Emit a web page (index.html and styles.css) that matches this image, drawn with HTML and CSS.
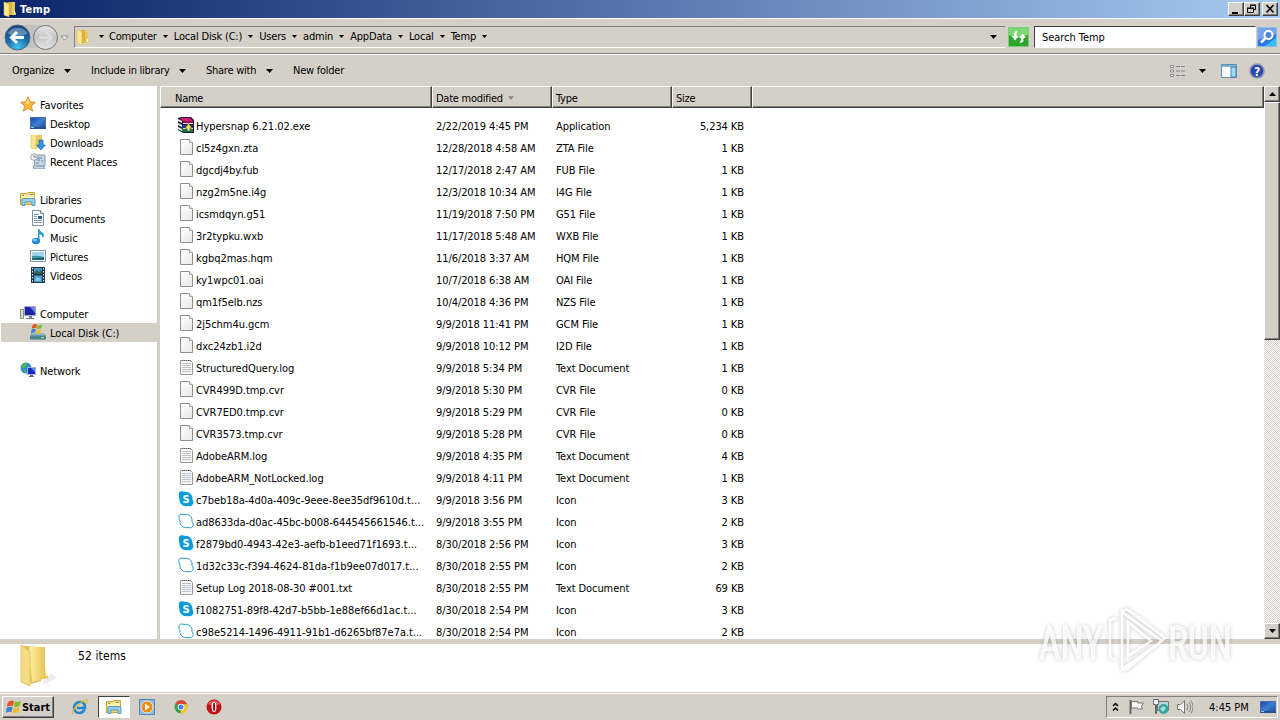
FILE: index.html
```html
<!DOCTYPE html>
<html lang="en">
<head>
    <meta charset="UTF-8">
    <meta name="viewport" content="width=device-width, initial-scale=1.0">
    <title>Temp</title>
    <link rel="stylesheet" href="styles.css">
</head>
<body>
    <!-- Icon definitions -->
    <svg class="defs" width="16" height="16">
        <defs>
            <linearGradient id="gold" x1="0" x2="1"><stop offset="0" stop-color="#fff0a0"/><stop offset="1" stop-color="#e2bd4c"/></linearGradient>
            <linearGradient id="page" x1="0" y1="0" x2="1" y2="1"><stop offset="0" stop-color="#fff"/><stop offset="1" stop-color="#e8e8e8"/></linearGradient>
            <linearGradient id="screen" x1="0" y1="0" x2="1" y2="1"><stop offset="0" stop-color="#1a3fa8"/><stop offset=".5" stop-color="#3f7fd8"/><stop offset="1" stop-color="#1c3f96"/></linearGradient>
            <radialGradient id="navblue" cx=".5" cy=".9" r=".9"><stop offset="0" stop-color="#3fc4ee"/><stop offset=".5" stop-color="#1c6fae"/><stop offset="1" stop-color="#123f78"/></radialGradient>
            <linearGradient id="navgray" x1="0" y1="0" x2="0" y2="1"><stop offset="0" stop-color="#e8e8e8"/><stop offset=".5" stop-color="#c4c4c4"/><stop offset="1" stop-color="#e4e4e4"/></linearGradient>
        </defs>
        <symbol id="folder" viewBox="0 0 16 16">
            <path d="M3 2l5-1v13l-5 1z" fill="#e3bc4e"/>
            <path d="M7 1h6v10l1 1v2H7z" fill="#ecc95c"/>
            <path d="M7 1h3v13H7z" fill="#dbb044"/>
            <path d="M2 1l5 2v13l-5-2z" fill="#fbe78e" stroke="#dcb850" stroke-width=".5"/>
            <path d="M12 10h1v3h-1z" fill="#fff"/>
        </symbol>
        <symbol id="file" viewBox="0 0 16 16">
            <path d="M2.500.500h9l3 3v12h-12z" fill="url(#page)" stroke="#8e8e8e"/>
            <path d="M11.500.500v3h3" fill="#fff" stroke="#a8a8a8"/>
        </symbol>
        <symbol id="text" viewBox="0 0 16 16">
            <path d="M2.500 1.500h10l2 2v12h-12z" fill="#f8f8f8" stroke="#9a9a9a"/>
            <path d="M4 4.500h9M4 6.500h9M4 8.500h9M4 10.500h9M4 12.500h9" stroke="#b9c6cd"/>
            <path d="M4 1.500h9" stroke="#666" stroke-dasharray="1 1"/>
        </symbol>
        <symbol id="skype" viewBox="0 0 16 16">
            <path d="M1 4C0 1 3-.5 6 .8c5-1 9 3 8.500 7.700C17 12 14 16.500 10 15 5 16 1 12.500 1.500 8 .7 6 .8 5 1 4z" fill="#0b9bd8"/>
            <text class="skype-s" x="8" y="12">S</text>
        </symbol>
        <symbol id="skypeline" viewBox="0 0 16 16">
            <path d="M1 4C.5 1.500 3 .3 6 1.500c5-1 8.500 2 8 7C17 12 14 16 10 14.500 5 15.500 1.500 12 2 8 1 6 .9 5 1 4z" fill="#fff" stroke="#2499cd"/>
        </symbol>
        <symbol id="rar" viewBox="0 0 16 16">
            <path d="M0 1l3-1h10l3 3v13H5l-5-3z" fill="#1c1a24"/>
            <path d="M2 1h10l3 3H5z" fill="#d41a78"/><path d="M5 4h10v2H5z" fill="#9c0c54"/>
            <path d="M1 6l4 2h10v3H5L1 9z" fill="#27309a"/><path d="M1 10l4 2h10v3H5l-4-2z" fill="#157a44"/>
            <path d="M5 6.500h10M5 11.500h10" stroke="#ddd"/>
            <path d="M0 2l4 2v2L0 4zM0 6l4 2v2L0 8zM0 10l4 2v2l-4-2z" fill="#eee"/>
            <path d="M9 14v-3H7l3.500-4.500L14 11h-2v3z" fill="#f2e44c" stroke="#333" stroke-width=".5"/>
        </symbol>
        <symbol id="star" viewBox="0 0 16 16">
            <path d="M8 .8l2.200 4.900 5.300.6-4 3.600 1.200 5.300L8 12.500l-4.700 2.700 1.200-5.300-4-3.600 5.300-.6z" fill="#fbb83c" stroke="#d97916" stroke-width=".7"/>
            <path d="M8 3l1.300 4L8 8 4 7l2.500-.5z" fill="#ffe79a"/>
        </symbol>
        <symbol id="desktop" viewBox="0 0 16 16">
            <path d="M.5 2.500h15v11H.5z" fill="url(#screen)" stroke="#4a6ca8"/>
            <path d="M0 12h16v2H0z" fill="#29518c"/><path d="M1 12h3v1H1z" fill="#7fd0e8"/>
        </symbol>
        <symbol id="downloads" viewBox="0 0 16 16">
            <path d="M1 1l5 1v13l-5-1z" fill="#fbe78e" stroke="#dcb850" stroke-width=".6"/>
            <path d="M6 1h6v13H6z" fill="#ecc95c"/>
            <path d="M9 6h4v5h2.500L11 16l-4.500-5H9z" fill="#3795e0" stroke="#1c68ad" stroke-width=".7"/>
        </symbol>
        <symbol id="recent" viewBox="0 0 16 16">
            <path d="M4 2h11v11h-2l2 3H4l-1-3h2z" fill="#c9d8e5" stroke="#8195a6"/>
            <path d="M7 5h5M7 7h3M11 8h2M6 10h3M6 13h7" stroke="#5e87aa"/>
            <circle cx="4" cy="4" r="3.300" fill="#f5f8fa" stroke="#98a7b3"/><path d="M4 2v2h2" fill="none" stroke="#667"/>
        </symbol>
        <symbol id="library" viewBox="0 0 16 16">
            <path d="M.5 2.500h6l1-1h7v12H.5z" fill="#f3d66b" stroke="#caa43c"/>
            <path d="M1 4h13v3H1z" fill="#fdf2ab"/><path d="M2 4h2v1H2z" fill="#52b166"/><path d="M10 3h3v1h-3z" fill="#5599d8"/>
            <path d="M2 14.500V9q0-1.500 1.500-1.500h10Q15 7.500 15 9v5.500h-3V11H5v3.500z" fill="#93cff0" stroke="#438dbd" stroke-width=".8"/>
        </symbol>
        <symbol id="document" viewBox="0 0 16 16">
            <path d="M2.500.5h8l3 3v12h-11z" fill="#fff" stroke="#7691ad"/>
            <path d="M4 4.500h5M4 6.500h3M4 8.500h3M4 10.500h8M4 12.500h8" stroke="#7798ba"/><path d="M8 6h4v3H8z" fill="#315b8a"/><path d="M10.500.5v3h3" fill="#d5e3ef" stroke="#7691ad"/>
        </symbol>
        <symbol id="music" viewBox="0 0 16 16">
            <path d="M8 0h1.500c0 3 4.500 3 4.500 7l-1.500 2c0-3-2-3.500-3-4v7H8z" fill="#2c9bcc"/>
            <ellipse cx="6" cy="12" rx="4" ry="3.200" fill="#2387d6"/><ellipse cx="5" cy="11" rx="2" ry="1.200" fill="#8bd3f4"/>
        </symbol>
        <symbol id="picture" viewBox="0 0 16 16">
            <path d="M.5 2.500h15v11H.5z" fill="#fff" stroke="#7896ac"/><path d="M2 4h12v8H2z" fill="#9fd4ee"/>
            <path d="M2 8q5-1 12 1v3H2z" fill="#3c97a4"/><path d="M2 10.500l12-1V12H2z" fill="#1c6570"/>
        </symbol>
        <symbol id="video" viewBox="0 0 16 16">
            <path d="M1 0h14v16H1z" fill="#263442"/><path d="M4 1h8v6H4z" fill="#4595cc"/><path d="M4 8.500h8V15H4z" fill="#4a9ed6"/>
            <path d="M4 6l3-3 2 2 3-2v4H4z" fill="#316451"/><path d="M5 13l3-3 3 3-3 1z" fill="#8fd0ee"/>
            <path d="M2.500 1v15M13.500 1v15" stroke="#dce5ea" stroke-dasharray="1.500 1.500"/>
        </symbol>
        <symbol id="computer" viewBox="0 0 16 16">
            <path d="M.5 4.500h3v9h-3z" fill="#d5dccd" stroke="#8b957f"/>
            <path d="M4.500 1.500h11v9h-11z" fill="#1b27a8" stroke="#a5abc9"/><path d="M10 2h5v6z" fill="#6c7fe4"/>
            <path d="M9 11h3v2h2v1H6v-1h3z" fill="#777d90"/>
        </symbol>
        <symbol id="flag4" viewBox="0 0 16 16">
            <path d="M2 3q3-2.500 6-1L7 7Q4 6 .8 8z" fill="#e35524"/><path d="M9 2.500q3 1 6-.5l-1.500 5q-3 1.500-5.500.5z" fill="#7fb928"/>
            <path d="M.6 9q3-2 6-.8L5.500 13q-3-1-5.500 1z" fill="#3b80d8"/><path d="M7.600 8.500q3 1.300 6-.3l-1.300 5q-3 1.500-6 .3z" fill="#f5bd25"/>
        </symbol>
        <symbol id="disk" viewBox="0 0 16 16">
            <path d="M1 9h13l2 2.500v4H0v-4z" fill="#8fb4be"/><path d="M0 11.500h16v4H0z" fill="#528292"/><path d="M11 13h3v1h-3z" fill="#8bec70"/>
            <use href="#flag4" x="1" y="-1" width="12" height="12"/>
        </symbol>
        <symbol id="network" viewBox="0 0 16 16">
            <circle cx="6" cy="6" r="5.500" fill="#2c8ed0"/><path d="M2 3q3-3 5-2L6 5 2 7zM3 9l3-1v3z" fill="#51b947"/>
            <path d="M7.500 5.500h8v7h-8z" fill="#1c2cb8" stroke="#a4b2da"/><path d="M11 6h4v4z" fill="#5f82e8"/><path d="M10 13h3v1h1v1H9v-1h1z" fill="#667"/>
        </symbol>
        <symbol id="down" viewBox="0 0 7 4"><path d="M0 0h7L3.500 4z"/></symbol>
    </svg>

    <header class="title-bar">
        <svg class="icon"><use href="#folder"/></svg>
        <h1>Temp</h1>
        <div class="window-buttons">
            <button><svg width="10" height="10"><path d="M1 8h6v2H1z"/></svg></button>
            <button><svg width="10" height="10"><path d="M3.500 4V1.500h5v4H7M3 1h6M.5 4.500h6v4h-6zM0 4h7" fill="none" stroke="#000"/></svg></button>
            <button class="close"><svg width="10" height="10"><path d="M1.500 1l7 7.500M8.500 1l-7 7.500" stroke="#000" stroke-width="1.600"/></svg></button>
        </div>
    </header>

    <div class="nav-bar">
        <svg class="nav-buttons" width="70" height="30">
            <path d="M14 3h34v23H14z" fill="#b9b9b9" opacity=".6"/>
            <circle cx="16.500" cy="15.500" r="12.500" fill="url(#navblue)" stroke="#53697c"/>
            <path d="M6.500 11.500a11 10 0 0 1 20 0q-10 5-20 0z" fill="#fff" opacity=".3"/>
            <path d="M23 15.500H11M16 10l-5.500 5.500L16 21" fill="none" stroke="#fff" stroke-width="3"/>
            <circle cx="44.500" cy="15.500" r="12" fill="url(#navgray)" stroke="#777"/>
            <path d="M38 15.500h12M45 10l5.500 5.500L45 21" fill="none" stroke="#dedede" stroke-width="2.500"/>
            <path d="M60 14h7l-3.500 4z" fill="#eee" stroke="#999"/>
        </svg>
        <div class="address">
            <svg class="icon"><use href="#folder"/></svg>
            <ul id="breadcrumbs"></ul>
            <svg class="arrow"><use href="#down"/></svg>
        </div>
        <svg class="refresh" width="21" height="20">
            <path d="M.5.500h20v19H.5z" fill="#2ba52d" stroke="#7ccf78"/><path d="M1 1h19v7q-9 5-19 0z" fill="#7cd775"/>
            <path d="M9.500 4Q6 4 6 7v2H3.500L7 13.500 10.500 9H8.500V7zM11.500 16q4 0 4-3v-2H18l-3.500-4.500L11 11h2v2z" fill="#fff"/>
        </svg>
        <div class="search">Search Temp</div>
        <svg class="search-button" width="20" height="20">
            <path d="M.5.500h19v19H.5z" fill="#2c7ae0" stroke="#8fb9e8"/><path d="M1 1h18v6L1 13z" fill="#7aa2ec"/><path d="M8 19l11-8v8z" fill="#35c0f0"/>
            <circle cx="11.500" cy="8" r="4" fill="#4d83de" stroke="#fff" stroke-width="2"/><path d="M8.500 11L4 15.500" stroke="#fff" stroke-width="2.500"/>
        </svg>
    </div>

    <div class="toolbar">
        <span class="organize">Organize</span><svg class="arrow"><use href="#down"/></svg>
        <span class="include">Include in library</span><svg class="arrow"><use href="#down"/></svg>
        <span class="share">Share with</span><svg class="arrow"><use href="#down"/></svg>
        <span class="new-folder">New folder</span>
        <div class="view-tools">
            <svg width="16" height="14"><path d="M.5 1.500h3v2h-3zM.5 6h3v2h-3zM.5 10.500h3v2h-3z" fill="#fff" stroke="#8a8a8a"/><path d="M6 2.500h9M6 7h9M6 11.500h9" stroke="#778090" stroke-dasharray="4 1"/></svg>
            <svg class="arrow"><use href="#down"/></svg>
            <svg class="preview" width="16" height="14"><path d="M.5.500h15v13H.5z" fill="#fff" stroke="#5b91b5"/><path d="M1 1h14v2H1z" fill="#7eb3d2"/><path d="M10 3h5v10h-5z" fill="#a5d8ec" stroke="#4289b2"/></svg>
            <svg class="help" width="16" height="16"><circle cx="8" cy="8" r="7" fill="#2747b4" stroke="#9098ac" stroke-width="1.600"/><text x="8" y="12.500">?</text></svg>
        </div>
    </div>

    <main>
        <nav class="sidebar" id="sidebar"></nav>
        <section class="files">
            <div class="file-head">
                <span>Name</span><span>Date modified<svg class="sort"><use href="#down"/></svg></span><span>Type</span><span>Size</span><span></span>
            </div>
            <div id="file-list"></div>
        </section>
        <div class="scrollbar">
            <button><svg width="7" height="4"><path d="M0 4h7L3.500 0z"/></svg></button>
            <div class="thumb"></div>
            <div class="track"></div>
            <button><svg width="7" height="4"><path d="M0 0h7L3.500 4z"/></svg></button>
        </div>
    </main>

    <section class="details">
        <svg width="46" height="46" viewBox="0 0 46 46">
            <path d="M28 38l8-9 6 5-12 6z" fill="#999" opacity=".2"/>
            <path d="M8 2l18 1v34l-10 3z" fill="#dfbc55"/>
            <path d="M14 3h16v23l3 3v5l-16 4z" fill="url(#gold)"/>
            <path d="M6 1l9 7v34l-9-4z" fill="#f4dc83" stroke="#e3c567"/>
            <path d="M30 24l3-1v8l-2 2z" fill="#fffbe8"/>
        </svg>
        <p>52 items</p>
    </section>

    <footer class="taskbar">
        <button class="start"><svg width="16" height="16" viewBox="0 0 16 16"><use href="#flag4"/></svg>Start</button>
        <div class="quick-launch">
            <span><svg class="icon" viewBox="0 0 16 16"><path d="M12.500 10.500Q11 14 7.500 14C4 14 2 11.500 2 8.500S4.500 3 8 3s5.500 3 5 6H5" fill="none" stroke="#2186d0" stroke-width="2.600"/><path d="M1 15Q-1 12 6 6t9-5q1 1-1 4" fill="none" stroke="#e9b62c" stroke-width="1.300"/></svg></span>
            <span class="active"><svg class="icon"><use href="#library"/></svg></span>
            <span><svg class="icon" viewBox="0 0 16 16"><path d="M.5.500h15v15H.5z" fill="#8ebde4" stroke="#5585b4"/><circle cx="8" cy="8" r="6" fill="#f58b13" stroke="#e5edf5"/><path d="M6 4.500l5 3.500-5 3.500z" fill="#fff"/></svg></span>
            <span><svg class="icon" viewBox="0 0 16 16"><circle cx="8" cy="8" r="6.500" fill="#36a14c"/><path d="M8 8L2.400 4.500A6.500 6.500 0 0 1 14 5.200H8z" fill="#dd4437"/><path d="M8 8V5.200h6A6.500 6.500 0 0 1 7.500 14.500z" fill="#f5c629"/><circle cx="8" cy="8" r="3.300" fill="#fff"/><circle cx="8" cy="8" r="2.500" fill="#417fe0"/></svg></span>
            <span><svg class="icon" viewBox="0 0 16 16"><circle cx="8" cy="8" r="7.500" fill="#bd1418"/><path d="M2 5a7 7 0 0 1 12 0L8 7z" fill="#e65a58"/><ellipse cx="8" cy="8" rx="2.400" ry="5" fill="#fff"/><ellipse cx="8" cy="8" rx="1.100" ry="4.300" fill="#a20f12"/></svg></span>
        </div>
        <div class="tray">
            <svg width="7" height="10"><path d="M1 4l2.500-2.500L6 4M1 8.500L3.500 6 6 8.500" fill="none" stroke="#000" stroke-width="1.500"/></svg>
            <svg class="tray-flag" width="16" height="16"><path d="M1.500 1v14" stroke="#666" stroke-width="2"/><path d="M2.500 2.500h6v1.500h6l-2 3 1 3h-5V9h-6z" fill="#f7f7f7" stroke="#777"/></svg>
            <svg class="tray-net" width="16" height="16"><path d="M4.500 2.500h11v9h-11z" fill="#bad5dc" stroke="#777"/><path d="M.5.500h5v5h-2v9h-1v-9h-2z" fill="#f4f4f4" stroke="#666"/><circle cx="10.500" cy="10" r="5" fill="#35a4a0"/><path d="M7 10q3-5 6-1l-3 4z" fill="#a0ded2"/></svg>
            <svg class="tray-sound" width="16" height="16"><path d="M.5 5.500h3l4-4v13l-4-4h-3z" fill="#f8f8f8" stroke="#777"/><path d="M10 5q2 3 0 6M12 3q3.500 5 0 10M14 1.500q4 6.500 0 13" fill="none" stroke="#888"/></svg>
            <span class="clock">4:45 PM</span>
            <svg class="icon"><use href="#desktop"/></svg>
        </div>
    </footer>

    <svg class="watermark" width="204" height="72">
        <text x="5" y="54" textLength="64" lengthAdjust="spacingAndGlyphs">ANY</text>
        <text x="134" y="54" textLength="64" lengthAdjust="spacingAndGlyphs">RUN</text>
        <path d="M82 13l-6 2v37l6 3M88 7v57l40-28zM94 17v34l23-15zM88 7l5-3 38 29-38 31-5 1" />
    </svg>

    <script>
        const crumbs = ["Computer", "Local Disk (C:)", "Users", "admin", "AppData", "Local", "Temp"];

        const groups = [
            [["star", "Favorites"], ["desktop", "Desktop"], ["downloads", "Downloads"], ["recent", "Recent Places"]],
            [["library", "Libraries"], ["document", "Documents"], ["music", "Music"], ["picture", "Pictures"], ["video", "Videos"]],
            [["computer", "Computer"], ["disk", "Local Disk (C:)"]],
            [["network", "Network"]]
        ];

        // icon, name, date, type, size
        const files = [
            ["rar", "Hypersnap 6.21.02.exe", "2/22/2019 4:45 PM", "Application", "5,234 KB"],
            ["file", "cl5z4gxn.zta", "12/28/2018 4:58 AM", "ZTA File", "1 KB"],
            ["file", "dgcdj4by.fub", "12/17/2018 2:47 AM", "FUB File", "1 KB"],
            ["file", "nzg2m5ne.i4g", "12/3/2018 10:34 AM", "I4G File", "1 KB"],
            ["file", "icsmdqyn.g51", "11/19/2018 7:50 PM", "G51 File", "1 KB"],
            ["file", "3r2typku.wxb", "11/17/2018 5:48 AM", "WXB File", "1 KB"],
            ["file", "kgbq2mas.hqm", "11/6/2018 3:37 AM", "HQM File", "1 KB"],
            ["file", "ky1wpc01.oai", "10/7/2018 6:38 AM", "OAI File", "1 KB"],
            ["file", "qm1f5elb.nzs", "10/4/2018 4:36 PM", "NZS File", "1 KB"],
            ["file", "2j5chm4u.gcm", "9/9/2018 11:41 PM", "GCM File", "1 KB"],
            ["file", "dxc24zb1.i2d", "9/9/2018 10:12 PM", "I2D File", "1 KB"],
            ["text", "StructuredQuery.log", "9/9/2018 5:34 PM", "Text Document", "1 KB"],
            ["file", "CVR499D.tmp.cvr", "9/9/2018 5:30 PM", "CVR File", "0 KB"],
            ["file", "CVR7ED0.tmp.cvr", "9/9/2018 5:29 PM", "CVR File", "0 KB"],
            ["file", "CVR3573.tmp.cvr", "9/9/2018 5:28 PM", "CVR File", "0 KB"],
            ["text", "AdobeARM.log", "9/9/2018 4:35 PM", "Text Document", "4 KB"],
            ["text", "AdobeARM_NotLocked.log", "9/9/2018 4:11 PM", "Text Document", "1 KB"],
            ["skype", "c7beb18a-4d0a-409c-9eee-8ee35df9610d.t...", "9/9/2018 3:56 PM", "Icon", "3 KB"],
            ["skypeline", "ad8633da-d0ac-45bc-b008-644545661546.t...", "9/9/2018 3:55 PM", "Icon", "2 KB"],
            ["skype", "f2879bd0-4943-42e3-aefb-b1eed71f1693.t...", "8/30/2018 2:56 PM", "Icon", "3 KB"],
            ["skypeline", "1d32c33c-f394-4624-81da-f1b9ee07d017.t...", "8/30/2018 2:55 PM", "Icon", "2 KB"],
            ["text", "Setup Log 2018-08-30 #001.txt", "8/30/2018 2:55 PM", "Text Document", "69 KB"],
            ["skype", "f1082751-89f8-42d7-b5bb-1e88ef66d1ac.t...", "8/30/2018 2:54 PM", "Icon", "3 KB"],
            ["skypeline", "c98e5214-1496-4911-91b1-d6265bf87e7a.t...", "8/30/2018 2:54 PM", "Icon", "2 KB"]
        ];

        const icon = name => `<svg class="icon"><use href="#${name}"/></svg>`;
        const arrow = `<svg class="crumb-arrow"><use href="#down"/></svg>`;

        document.getElementById("breadcrumbs").innerHTML =
            arrow + crumbs.map(name => `<li>${name}</li>${arrow}`).join("");

        document.getElementById("sidebar").innerHTML = groups.map(group =>
            `<ul>${group.map(([i, name]) => `<li class="${i}">${icon(i)}${name}</li>`).join("")}</ul>`
        ).join("");

        document.getElementById("file-list").innerHTML = files.map(([i, name, date, type, size]) =>
            `<div class="file-row"><span class="name">${icon(i)}${name}</span><span>${date}</span><span>${type}</span><span class="size">${size}</span></div>`
        ).join("");
    </script>
</body>
</html>
```
FILE: styles.css
```css
* {
    box-sizing: border-box;
}

body {
    display: flex;
    flex-direction: column;
    width: 1280px;
    height: 720px;
    margin: 0;
    overflow: hidden;
    background-color: #d4d0c8;
    color: #000;
    font-family: 'DejaVu Sans Condensed', 'DejaVu Sans', sans-serif;
    font-stretch: condensed;
    font-size: 11px;
    letter-spacing: -0.25px;
    white-space: nowrap;
}

ul {
    list-style: none;
    margin: 0;
    padding: 0;
}

svg {
    flex: none;
}

.defs {
    position: absolute;
}

.icon {
    width: 16px;
    height: 16px;
}

.arrow {
    width: 7px;
    height: 4px;
}

button {
    display: flex;
    align-items: center;
    justify-content: center;
    padding: 0;
    background-color: #d4d0c8;
    border: 1px solid;
    border-color: #fff #404040 #404040 #fff;
    box-shadow: inset -1px -1px #808080;
}

.title-bar {
    display: flex;
    align-items: center;
    height: 18px;
    padding: 0 2px;
    background: linear-gradient(to right, #0a246a, #a6caf0);
    color: #fff;
}

.title-bar h1 {
    margin: 0 0 0 2px;
    font-size: 11px;
    letter-spacing: 0.2px;
}

.window-buttons {
    display: flex;
    margin-left: auto;
}

.window-buttons button {
    width: 16px;
    height: 14px;
}

.window-buttons .close {
    margin-left: 2px;
}

.nav-bar {
    display: flex;
    align-items: center;
    height: 36px;
    padding: 1px 2px 0 1px;
    border-top: 1px solid #fff;
    border-bottom: 1px solid #808080;
}

.nav-buttons {
    margin-right: 3px;
}

.address {
    display: flex;
    align-items: center;
    width: 931px;
    height: 22px;
    border: 1px solid #808080;
    border-right: 0;
    border-bottom-color: #fff;
}

.address > .arrow {
    margin-left: auto;
    margin-right: 8px;
}

#breadcrumbs {
    display: flex;
    align-items: center;
    margin-left: 8px;
    letter-spacing: -0.18px;
}

.crumb-arrow {
    width: 5px;
    height: 3px;
    margin: 0 6px 0 6px;
}

#breadcrumbs .crumb-arrow:first-child {
    margin-left: 0;
    margin-right: 5px;
}

.refresh {
    margin: 0 5px 0 3px;
}

.search {
    width: 222px;
    height: 22px;
    padding: 4px 7px;
    background-color: #fff;
    border: 1px solid;
    border-color: #404040 #fff #fff #404040;
    letter-spacing: -0.05px;
}

.search-button {
    margin-left: 1px;
}

.toolbar {
    display: flex;
    align-items: center;
    height: 32px;
    padding: 0 15px 0 12px;
    border-top: 1px solid #fff;
}

.organize {
    width: 52px;
}

.include {
    width: 88px;
    margin-left: 20px;
}

.share {
    width: 60px;
    margin-left: 20px;
}

.new-folder {
    margin-left: 20px;
}

.view-tools {
    display: flex;
    align-items: center;
    margin-left: auto;
}

.view-tools .arrow {
    margin: 0 15px 0 13px;
}

.help {
    margin-left: 12px;
}

.help text {
    fill: #fff;
    font-size: 12px;
    font-weight: bold;
    text-anchor: middle;
}

main {
    display: flex;
    height: 553px;
}

.sidebar {
    width: 160px;
    padding-top: 9px;
    background-color: #fff;
    border-right: 3px solid #d4d0c8;
    letter-spacing: -0.12px;
}

.sidebar ul {
    margin-bottom: 19px;
}

.sidebar li {
    display: flex;
    align-items: center;
    gap: 4px;
    height: 19px;
    padding-top: 1px;
    padding-left: 30px;
}

.sidebar .icon {
    margin-bottom: 2px;
}

.sidebar li:first-child {
    padding-left: 20px;
}

.sidebar .disk {
    margin-left: 1px;
    padding-left: 29px;
    background-color: #d4d0c8;
}

.files {
    width: 1104px;
    overflow: hidden;
    background-color: #fff;
}

.file-head {
    display: grid;
    grid-template-columns: 272px 120px 120px 80px 1fr;
    height: 22px;
    margin-bottom: 7px;
    background-color: #d4d0c8;
}

.file-head span {
    display: flex;
    align-items: center;
    padding: 2px 0 0 3px;
    border: 1px solid;
    border-color: #fff #404040 #404040 #fff;
    box-shadow: inset -1px -1px #808080;
}

.file-head span:first-child {
    padding-left: 14px;
}

.sort {
    width: 6px;
    height: 4px;
    margin-left: 5px;
    fill: #808080;
}

.file-row {
    display: grid;
    grid-template-columns: 258px 120px 120px 68px;
    align-items: center;
    height: 22px;
    padding-left: 18px;
    letter-spacing: -0.08px;
}

.file-row .name {
    display: flex;
    align-items: center;
    gap: 2px;
    letter-spacing: -0.04px;
}

.file-row .icon {
    margin-bottom: 2px;
}

.file-row .size {
    text-align: right;
}

.skype-s {
    fill: #fff;
    font-size: 11px;
    font-weight: bold;
    text-anchor: middle;
}

.scrollbar {
    display: flex;
    flex-direction: column;
    width: 16px;
}

.scrollbar button {
    height: 16px;
}

.thumb {
    height: 238px;
    background-color: #d4d0c8;
    border: 1px solid;
    border-color: #fff #404040 #404040 #fff;
    box-shadow: inset -1px -1px #808080;
}

.track {
    flex: 1;
    background: repeating-conic-gradient(#fff 0 25%, #d4d0c8 0 50%) 0 0 / 2px 2px;
}

.details {
    display: flex;
    height: 49px;
    margin-top: 5px;
    padding-left: 15px;
    background-color: #fff;
    border-bottom: 1px solid #d4d0c8;
    font-size: 12px;
    letter-spacing: 0.1px;
}

.details p {
    margin: 5px 0 0 17px;
}

.taskbar {
    display: flex;
    height: 27px;
    padding: 2px;
    border-top: 1px solid #fff;
}

.start {
    width: 52px;
    height: 22px;
    color: #000;
    font: bold 11px 'DejaVu Sans Condensed', sans-serif;
    font-stretch: condensed;
    letter-spacing: 0;
}

.quick-launch {
    display: flex;
    margin-left: 10px;
}

.quick-launch span {
    display: flex;
    align-items: center;
    justify-content: center;
    width: 32px;
    height: 22px;
    margin-right: 1.600px;
}

.quick-launch .active {
    background-color: #fff;
    border: 1px solid;
    border-color: #404040 #fff #fff #404040;
}

.tray {
    display: flex;
    align-items: center;
    width: 172px;
    height: 22px;
    margin-left: auto;
    padding: 0 1px 0 5px;
    border: 1px solid;
    border-color: #808080 #fff #fff #808080;
}

.tray-flag {
    margin-left: 10px;
}

.tray-net {
    margin-left: 8px;
}

.tray-sound {
    margin-left: 8px;
}

.clock {
    margin-left: 16px;
    margin-right: auto;
    letter-spacing: 0;
}

.watermark {
    position: absolute;
    left: 1034px;
    top: 605px;
    fill: none;
    stroke: #fff;
    stroke-width: 2.500;
    filter: drop-shadow(0 0 2px rgba(0, 0, 0, 0.3));
    opacity: 0.75;
    overflow: visible;
}

.watermark text {
    fill: #f8f8f8;
    stroke-width: 1;
    font-family: 'Roboto', sans-serif;
    font-size: 47px;
    letter-spacing: 0;
}
```
